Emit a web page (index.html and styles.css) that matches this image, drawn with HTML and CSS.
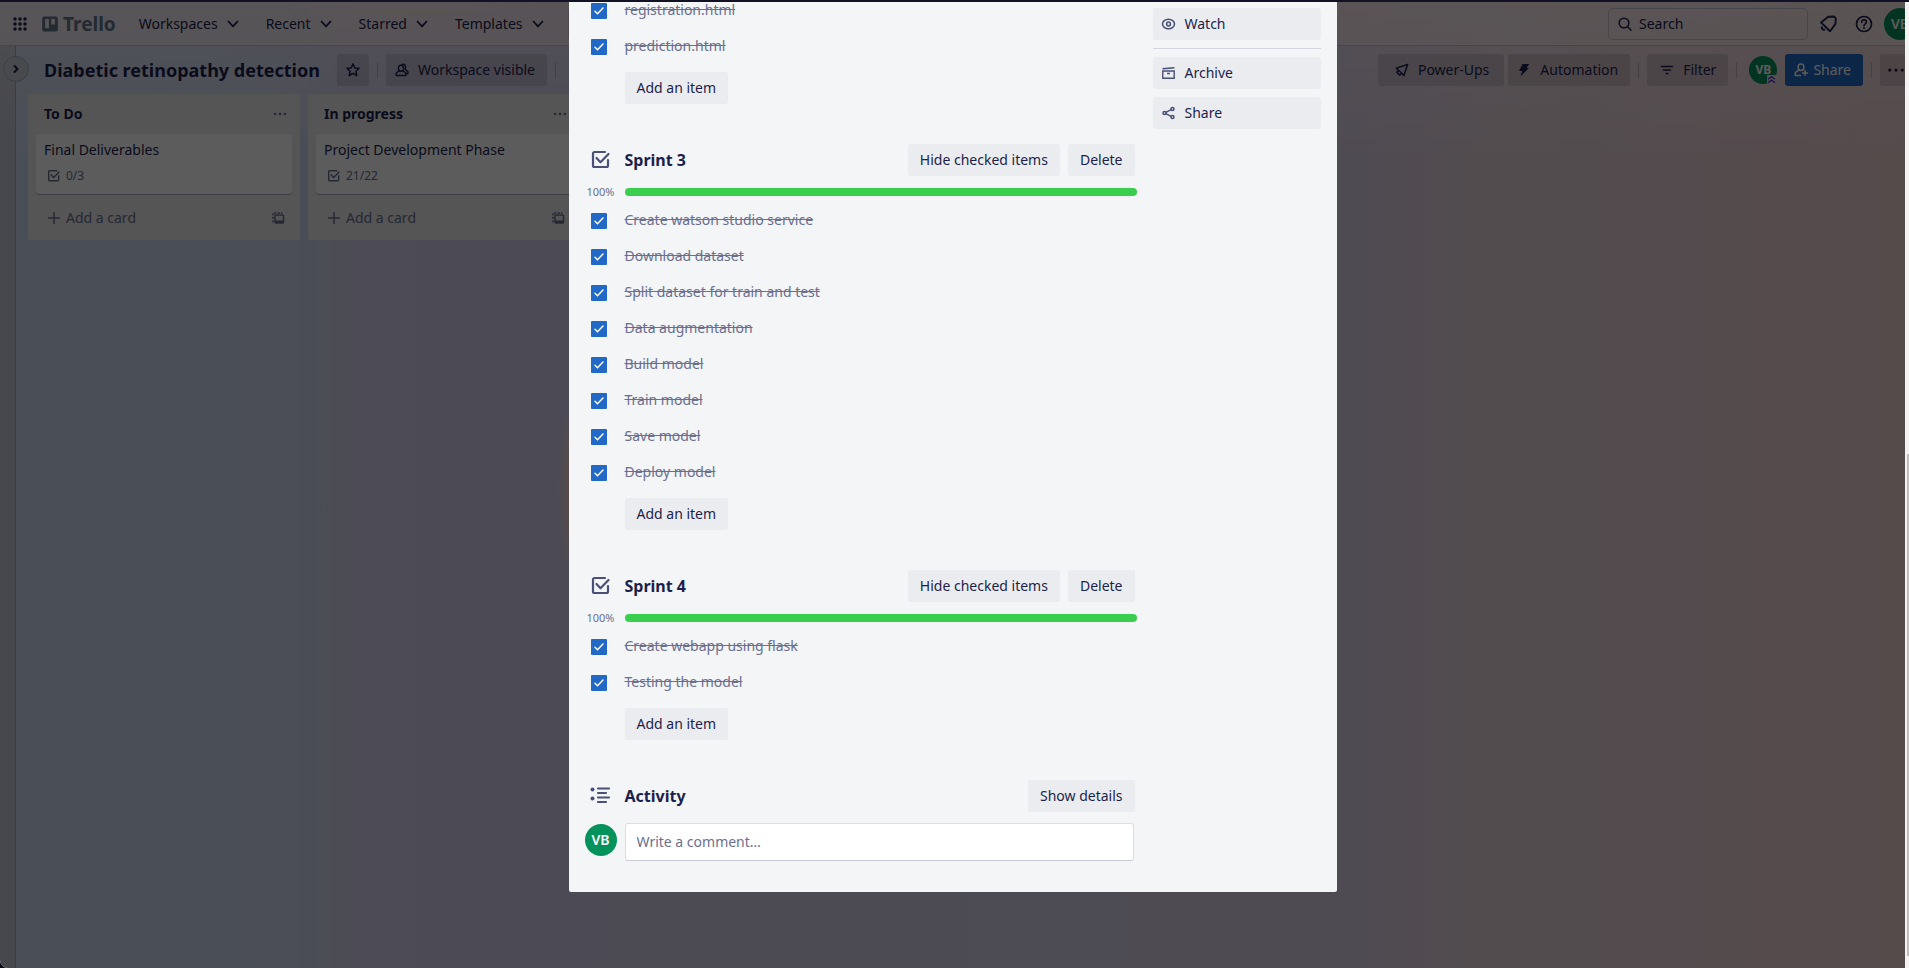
FILE: index.html
```html
<!DOCTYPE html>
<html lang="en">
<head>
<meta charset="utf-8">
<title>Diabetic retinopathy detection | Trello</title>
<link rel="stylesheet" href="styles.css">
</head>
<body>
<svg class="defs" aria-hidden="true">
  <symbol id="chevron" viewBox="0 0 16 16"><path d="M3.500 5.500l4.500 4.800 4.500-4.800" fill="none" stroke="currentColor" stroke-width="1.800" stroke-linecap="round" stroke-linejoin="round"/></symbol>
  <symbol id="check" viewBox="0 0 24 24"><path d="M16 4H5.500A1.500 1.500 0 0 0 4 5.500v12A1.500 1.500 0 0 0 5.500 19h12a1.500 1.500 0 0 0 1.500-1.500v-5.500" fill="none" stroke="currentColor" stroke-width="2.200" stroke-linecap="round"/><path d="M7.500 10l4 4.300 8-8.300" fill="none" stroke="currentColor" stroke-width="2.200" stroke-linecap="round" stroke-linejoin="round"/></symbol>
  <symbol id="dots" viewBox="0 0 16 16"><g fill="currentColor"><circle cx="3" cy="8" r="1.300"/><circle cx="8" cy="8" r="1.300"/><circle cx="13" cy="8" r="1.300"/></g></symbol>
  <symbol id="plus" viewBox="0 0 16 16"><path d="M8 2.500v11M2.500 8h11" stroke="currentColor" stroke-width="1.500" stroke-linecap="round"/></symbol>
  <symbol id="template" viewBox="0 0 16 16"><path d="M3 12.500V3h9.500" fill="none" stroke="currentColor" stroke-width="1.400" stroke-dasharray="2.300 1.200"/><rect x="5" y="5" width="8.500" height="8" rx="1" fill="none" stroke="currentColor" stroke-width="1.500"/><path d="M5 10.500h8.500V13H5z" fill="currentColor"/></symbol>
  <symbol id="rocket" viewBox="0 0 16 16"><path d="M13.600 2.400L2.300 6.300l2.200 2-1.700 1.900 2.900 2.900 2-1.800 2.200 2.300zM4.500 8.300l3.300 3" fill="none" stroke="currentColor" stroke-width="1.500" stroke-linejoin="round"/></symbol>
</svg>
<div class="titlebar"></div>
<div class="window">
  <div class="page">
    <header class="nav">
      <button class="apps" aria-label="Apps"><svg viewBox="0 0 14 14" width="14" height="14"><g fill="currentColor"><circle cx="2" cy="2" r="1.700"/><circle cx="7" cy="2" r="1.700"/><circle cx="12" cy="2" r="1.700"/><circle cx="2" cy="7" r="1.700"/><circle cx="7" cy="7" r="1.700"/><circle cx="12" cy="7" r="1.700"/><circle cx="2" cy="12" r="1.700"/><circle cx="7" cy="12" r="1.700"/><circle cx="12" cy="12" r="1.700"/></g></svg></button>
      <a class="logo" href="#"><svg viewBox="0 0 16 16" width="16" height="16"><path fill-rule="evenodd" fill="currentColor" d="M2 0.500h12a1.800 1.800 0 0 1 1.800 1.800v11.500a1.800 1.800 0 0 1-1.800 1.800H2A1.800 1.800 0 0 1 .200 13.800V2.300A1.800 1.800 0 0 1 2 .500zM3.200 3v9.200h3.700V3zM9.200 3v5.600h3.700V3z"/></svg><span>Trello</span></a>
      <nav class="menus">
        <button>Workspaces<svg width="16" height="16"><use href="#chevron"/></svg></button>
        <button>Recent<svg width="16" height="16"><use href="#chevron"/></svg></button>
        <button>Starred<svg width="16" height="16"><use href="#chevron"/></svg></button>
        <button>Templates<svg width="16" height="16"><use href="#chevron"/></svg></button>
        <button class="create" aria-label="Create"><svg width="16" height="16"><use href="#plus"/></svg></button>
      </nav>
      <div class="nav-end">
        <label class="search"><svg viewBox="0 0 14 14" width="14" height="14"><circle cx="6" cy="6" r="4.800" fill="none" stroke="currentColor" stroke-width="1.500"/><path d="M9.500 9.500l3.500 3.700" stroke="currentColor" stroke-width="1.500" stroke-linecap="round"/></svg><input type="text" placeholder="Search" aria-label="Search"></label>
        <button class="round" aria-label="Notifications"><svg viewBox="0 0 20 20" width="20" height="20"><path d="M9.800 3L15.500 2.800 17.200 4.500 17 10.200 11.500 17.600 2.500 8.700z" transform="translate(.5 -.3)" fill="none" stroke="currentColor" stroke-width="1.900" stroke-linejoin="round"/><path d="M4.300 12.600c-1.500 1.500.8 4 2.700 2.600" fill="none" stroke="currentColor" stroke-width="1.900"/></svg></button>
        <button class="round" aria-label="Help"><svg viewBox="0 0 20 20" width="20" height="20"><circle cx="10" cy="10" r="7.500" fill="none" stroke="currentColor" stroke-width="1.700"/><path d="M7.700 8.200c0-3.200 4.700-2.900 4.700-.1 0 1.800-2.400 1.700-2.400 3.600" fill="none" stroke="currentColor" stroke-width="1.700" stroke-linecap="round"/><circle cx="10" cy="14" r="1" fill="currentColor"/></svg></button>
        <button class="avatar">VB</button>
      </div>
    </header>

    <div class="workspace">
      <aside class="drawer"><button class="drawer-toggle" aria-label="Expand sidebar"><svg viewBox="0 0 16 16" width="16" height="16"><path d="M6.500 5l3 3-3 3" fill="none" stroke="currentColor" stroke-width="2" stroke-linecap="round" stroke-linejoin="round"/></svg></button></aside>
      <main class="board">
        <div class="board-bar">
          <h1>Diabetic retinopathy detection</h1>
          <button class="tool star" aria-label="Star board"><svg viewBox="0 0 16 16" width="16" height="16"><path d="M8 1.900l1.800 4 4.300.4-3.200 2.900.9 4.300L8 11.300l-3.800 2.200.9-4.300L1.900 6.300l4.300-.4z" fill="none" stroke="currentColor" stroke-width="1.500" stroke-linejoin="round"/></svg></button>
          <i class="rule"></i>
          <button class="tool visible"><svg viewBox="0 0 16 16" width="16" height="16"><g fill="none" stroke="currentColor" stroke-width="1.400" stroke-linejoin="round"><ellipse cx="7" cy="6.300" rx="2.600" ry="3"/><path d="M5.300 8.800L2.200 11v2.500h9.600V11L8.700 8.800M7.500 2.800c3-1.800 5.300 1.600 3.700 4.600l2.700 2.300v2.100h-2"/></g></svg>Workspace visible</button>
          <i class="rule"></i>
          <div class="board-end">
            <button class="tool power"><svg width="16" height="16"><use href="#rocket"/></svg>Power-Ups</button>
            <button class="tool auto"><svg viewBox="0 0 16 16" width="16" height="16"><path d="M6.500 2h6.700L10.500 6h2.300l-8.300 8.500L6.200 9H3z" fill="currentColor"/></svg>Automation</button>
            <i class="rule"></i>
            <button class="tool"><svg viewBox="0 0 16 16" width="16" height="16"><path d="M2.500 4.500h11M4.500 8h7M7.200 11.500h1.600" stroke="currentColor" stroke-width="1.600" stroke-linecap="round"/></svg>Filter</button>
            <i class="rule"></i>
            <span class="member"><button class="avatar small">VB</button><svg class="badge" viewBox="0 0 9 9" width="9" height="9"><rect width="9" height="9" rx="1" fill="#e4e0f0"/><path d="M1 4.300l3.500-2.700L8 4.300M1 7.800l3.500-2.700L8 7.800" fill="none" stroke="#5a35c0" stroke-width="1.400"/></svg></span>
            <button class="tool share"><svg viewBox="0 0 16 16" width="16" height="16"><g fill="none" stroke="currentColor" stroke-width="1.500" stroke-linecap="round" stroke-linejoin="round"><ellipse cx="8" cy="5.200" rx="2.900" ry="3.200"/><path d="M6 7.800L2.300 10.700v2.700h5.200M12 8.500v5M9.500 11h5"/></g></svg>Share</button>
            <i class="rule"></i>
            <button class="tool more" aria-label="Show menu"><svg width="20" height="20"><use href="#dots"/></svg></button>
          </div>
        </div>
        <div class="lists">
          <section class="list">
            <header><h2>To Do</h2><button aria-label="List actions"><svg width="16" height="16"><use href="#dots"/></svg></button></header>
            <a class="card" href="#"><span>Final Deliverables</span><small><svg width="16" height="16"><use href="#check"/></svg>0/3</small></a>
            <footer><button><svg width="16" height="16"><use href="#plus"/></svg>Add a card</button><button aria-label="Create from template"><svg width="16" height="16"><use href="#template"/></svg></button></footer>
          </section>
          <section class="list">
            <header><h2>In progress</h2><button aria-label="List actions"><svg width="16" height="16"><use href="#dots"/></svg></button></header>
            <a class="card" href="#"><span>Project Development Phase</span><small><svg width="16" height="16"><use href="#check"/></svg>21/22</small></a>
            <footer><button><svg width="16" height="16"><use href="#plus"/></svg>Add a card</button><button aria-label="Create from template"><svg width="16" height="16"><use href="#template"/></svg></button></footer>
          </section>
        </div>
      </main>
    </div>

    <div class="overlay">
      <div class="dialog" role="dialog" aria-label="Project Development Phase">
        <div class="detail">
          <section class="checklist scrolled">
            <ul>
              <li><label><input type="checkbox" checked><span>registration.html</span></label></li>
              <li><label><input type="checkbox" checked><span>prediction.html</span></label></li>
            </ul>
            <button class="btn add">Add an item</button>
          </section>
          <section class="checklist">
            <header class="head"><svg width="24" height="24"><use href="#check"/></svg><h3>Sprint 3</h3><button class="btn">Hide checked items</button><button class="btn">Delete</button></header>
            <div class="progress"><span>100%</span><div class="bar"></div></div>
            <ul>
              <li><label><input type="checkbox" checked><span>Create watson studio service</span></label></li>
              <li><label><input type="checkbox" checked><span>Download dataset</span></label></li>
              <li><label><input type="checkbox" checked><span>Split dataset for train and test</span></label></li>
              <li><label><input type="checkbox" checked><span>Data augmentation</span></label></li>
              <li><label><input type="checkbox" checked><span>Build model</span></label></li>
              <li><label><input type="checkbox" checked><span>Train model</span></label></li>
              <li><label><input type="checkbox" checked><span>Save model</span></label></li>
              <li><label><input type="checkbox" checked><span>Deploy model</span></label></li>
            </ul>
            <button class="btn add">Add an item</button>
          </section>
          <section class="checklist">
            <header class="head"><svg width="24" height="24"><use href="#check"/></svg><h3>Sprint 4</h3><button class="btn">Hide checked items</button><button class="btn">Delete</button></header>
            <div class="progress"><span>100%</span><div class="bar"></div></div>
            <ul>
              <li><label><input type="checkbox" checked><span>Create webapp using flask</span></label></li>
              <li><label><input type="checkbox" checked><span>Testing the model</span></label></li>
            </ul>
            <button class="btn add">Add an item</button>
          </section>
          <section>
            <header class="head"><svg viewBox="0 0 24 24" width="24" height="24"><g fill="none" stroke="currentColor" stroke-width="2.200" stroke-linecap="round"><path d="M9 4.500h11M9 9h8M9 13.500h11M9 18h8"/></g><g fill="currentColor"><circle cx="3.500" cy="5.500" r="2"/><circle cx="3.500" cy="14.500" r="2"/></g></svg><h3>Activity</h3><button class="btn">Show details</button></header>
            <div class="comment"><span class="avatar">VB</span><input type="text" placeholder="Write a comment…" aria-label="Write a comment"></div>
          </section>
        </div>
        <aside class="actions">
          <button class="btn"><svg viewBox="0 0 16 16" width="16" height="16"><g fill="none" stroke="currentColor" stroke-width="1.500"><ellipse cx="7.500" cy="8" rx="6" ry="4.700"/><circle cx="7.500" cy="8" r="1.900"/></g></svg>Watch</button>
          <hr>
          <button class="btn"><svg viewBox="0 0 16 16" width="16" height="16"><g fill="none" stroke="currentColor" stroke-width="1.400"><path d="M1.800 6h11.400v7.300H1.800zM1.500 3.700L13.500 2.800M6 8.500h3"/></g></svg>Archive</button>
          <button class="btn"><svg viewBox="0 0 16 16" width="16" height="16"><g fill="none" stroke="currentColor" stroke-width="1.500"><circle cx="3.500" cy="8" r="1.500"/><circle cx="11.500" cy="4" r="1.500"/><circle cx="11.500" cy="12" r="1.500"/><path d="M4.800 7.300l5.300-2.600M4.800 8.700l5.300 2.600"/></g></svg>Share</button>
        </aside>
      </div>
    </div>
  </div>
  <div class="scroll"><div class="thumb"></div></div>
</div>
</body>
</html>
```
FILE: styles.css
```css
* { box-sizing: border-box; }
body, h1, h2, h3, ul { margin: 0; padding: 0; }
body {
  height: 100vh;
  display: flex;
  flex-direction: column;
  overflow: hidden;
  background: #0a0a10;
  color: #1c1f4c;
  font: 14px/20px "Noto Sans", sans-serif;
}
button, input { font: inherit; color: inherit; margin: 0; }
button { border: 0; padding: 0; background: none; cursor: pointer; }
a { color: inherit; text-decoration: none; }
ul { list-style: none; }
svg { flex: none; display: block; }
.defs { position: absolute; width: 0; height: 0; }

.titlebar { flex: none; height: 2px; background: #131124; }
.window { flex: 1; min-height: 0; display: flex; }
.page {
  position: relative;
  flex: 1;
  min-width: 0;
  display: flex;
  flex-direction: column;
  overflow: hidden;
  border-bottom-left-radius: 8px;
  background:
    linear-gradient(rgba(255, 240, 255, .35), transparent 160px),
    radial-gradient(circle 332px at 890px 487px, #f6cfc4 0, #f6cfc4 96%, transparent 100%),
    linear-gradient(90deg, #ced9f0 0, #cfd8ee 15%, #d3d2ec 18%, #d2d0ea 30%, #d3d0e8 50%, #dcd0e4 71%, #e4d3da 79%, #ead0d6 92%, #eccfd1 100%);
}
.scroll { flex: none; width: 4px; padding-left: 2px; background: #f3f3f3; }
.thumb { height: 52%; margin-top: 452px; background: #bdbdbd; }

.nav {
  flex: none;
  display: flex;
  align-items: center;
  height: 44px;
  padding-left: 13px;
  background: rgba(255, 240, 238, .6);
  border-bottom: 1px solid #c9c2cc;
}
.logo { display: flex; align-items: center; gap: 5px; margin-left: 15px; color: #61748c; font-size: 19px; font-weight: 700; }
.menus { display: flex; align-items: center; gap: 25px; margin-left: 23px; }
.menus button { display: flex; align-items: center; gap: 7px; }
.menus .create { height: 32px; padding: 0 12px; border-radius: 3px; background: #d8d0d8; margin-left: -3px; }
.nav-end { display: flex; align-items: center; gap: 4px; margin: 0 -11px 0 auto; }
.search {
  display: flex;
  align-items: center;
  gap: 7px;
  width: 200px;
  height: 32px;
  padding-left: 9px;
  border: 1px solid #c6c1cc;
  border-radius: 5px;
}
.search input { width: 150px; border: 0; padding: 0; background: none; }
.search input::placeholder { color: inherit; opacity: 1; }
.round { display: grid; place-items: center; width: 32px; height: 32px; }
.avatar {
  flex: none;
  display: grid;
  place-items: center;
  width: 32px;
  height: 32px;
  border-radius: 50%;
  background: #04925c;
  color: #fff;
  font-weight: 600;
}
.avatar.small { width: 28px; height: 28px; font-size: 12px; font-weight: 700; }

.workspace { flex: 1; display: flex; min-height: 0; }
.drawer { flex: none; width: 16px; border-right: 1px solid #a8a6b4; background: linear-gradient(rgba(200, 205, 205, .7), rgba(192, 188, 208, .7) 90px); }
.drawer-toggle {
  position: relative;
  display: grid;
  place-items: center;
  width: 26px;
  height: 26px;
  margin: 10px 0 0 3px;
  border: 1px solid #a9abb8;
  border-radius: 50%;
  background: #c9ccd4;
}
.board { flex: 1; min-width: 0; padding: 8px 0 0 12px; }
.board-bar { display: flex; align-items: center; height: 32px; padding-left: 16px; }
.board-bar h1 { margin-right: 17px; font-size: 18px; line-height: 24px; font-weight: 700; white-space: nowrap; }
.rule { width: 1px; height: 16px; margin: 0 8px; background: #b5b2c0; }
.tool {
  display: flex;
  align-items: center;
  gap: 8px;
  height: 32px;
  padding: 0 12px;
  border-radius: 3px;
  background: rgba(90, 80, 90, .18);
  white-space: nowrap;
}
.star { padding: 0 8px; }
.visible { padding-left: 8px; }
.board-end { display: flex; align-items: center; margin: 0 -7px 0 auto; }
.power { padding: 0 15px 0 16px; margin-right: 4px; }
.auto { padding-left: 8px; }
.share { gap: 4px; padding-left: 8px; background: #2169c5; color: #fff; }
.more { padding: 0 6px; }
.member { position: relative; margin: 0 8px 0 4px; }
.badge { position: absolute; right: 1px; bottom: 0; }

.lists { display: flex; align-items: flex-start; gap: 8px; margin-top: 8px; }
.list { flex: none; width: 272px; padding: 0 8px; border-radius: 3px; background: #ebecec; }
.list header { display: flex; justify-content: space-between; align-items: center; height: 40px; padding: 0 4px 0 8px; }
.list h2 { font-size: 14px; line-height: 20px; font-weight: 700; }
.list header button, .list footer, .card small { color: #6b6f8f; }
.card { display: block; height: 60px; padding: 6px 8px; border-radius: 3px; background: #fff; box-shadow: 0 1px 0 #a9abc0; }
.card span { display: block; }
.card small { display: flex; align-items: center; gap: 4px; padding: 6px 0 0 2px; font-size: 12px; }
.list footer { display: flex; justify-content: space-between; align-items: center; height: 46px; padding: 2px 6px 0 10px; }
.list footer button { display: flex; align-items: center; gap: 4px; }

.overlay {
  position: absolute;
  inset: 0;
  display: flex;
  justify-content: center;
  align-items: flex-start;
  background: rgba(0, 0, 0, .64);
}
.dialog {
  display: flex;
  gap: 16px;
  width: 768px;
  padding: 0 16px 31px;
  overflow: hidden;
  border-radius: 0 0 2px 2px;
  background: #f4f5f7;
}
.detail { flex: 1; min-width: 0; }
.scrolled { margin-top: -9px; }
.checklist { padding-bottom: 40px; }
.checklist li label { display: flex; align-items: center; height: 36px; padding-left: 6px; }
.checklist input {
  appearance: none;
  width: 16px;
  height: 16px;
  margin-right: 18px;
  border-radius: 1px;
  background: #2169c5 url("data:image/svg+xml,%3Csvg xmlns='http://www.w3.org/2000/svg' viewBox='0 0 16 16'%3E%3Cpath d='M4 8.200l2.500 2.500 5.500-5.700' fill='none' stroke='white' stroke-width='1.500' stroke-linecap='round'/%3E%3C/svg%3E");
}
.checklist li span { color: #6b6f8f; text-decoration: line-through; padding-bottom: 2px; }
.btn { height: 32px; padding: 0 12px; border-radius: 3px; background: #ebecf0; white-space: nowrap; }
.add { margin: 7px 0 0 40px; display: block; }
.head { display: flex; align-items: center; gap: 8px; padding: 0 2px 0 4px; }
.head svg { color: #4a5078; }
.head h3 { flex: 1; margin-left: 4px; font-size: 16px; line-height: 20px; font-weight: 700; }
.progress { display: flex; align-items: center; gap: 8px; height: 16px; margin: 8px 0 3px; }
.progress span { width: 32px; text-align: center; font-size: 11px; line-height: 16px; color: #6b6f8f; }
.bar { flex: 1; height: 8px; border-radius: 4px; background: #3ace4f; }
.comment { display: flex; gap: 8px; align-items: center; margin: 11px 3px 0 0; }
.comment .avatar { margin-bottom: 4px; }
.comment input {
  flex: 1;
  height: 38px;
  padding: 0 11px 2px;
  border: 1px solid #dddee6;
  border-bottom-color: #ccccd8;
  border-radius: 3px;
  background: #fff;
}
.comment input::placeholder { color: #6b6f8f; opacity: 1; }
.actions { flex: none; display: flex; flex-direction: column; gap: 8px; width: 168px; padding-top: 6px; }
.actions .btn { display: flex; align-items: center; gap: 8px; padding: 0 8px; }
.actions .btn svg { color: #4a5078; }
.actions hr { width: 100%; height: 1px; margin: 0; border: 0; background: #d3d5de; }
```
